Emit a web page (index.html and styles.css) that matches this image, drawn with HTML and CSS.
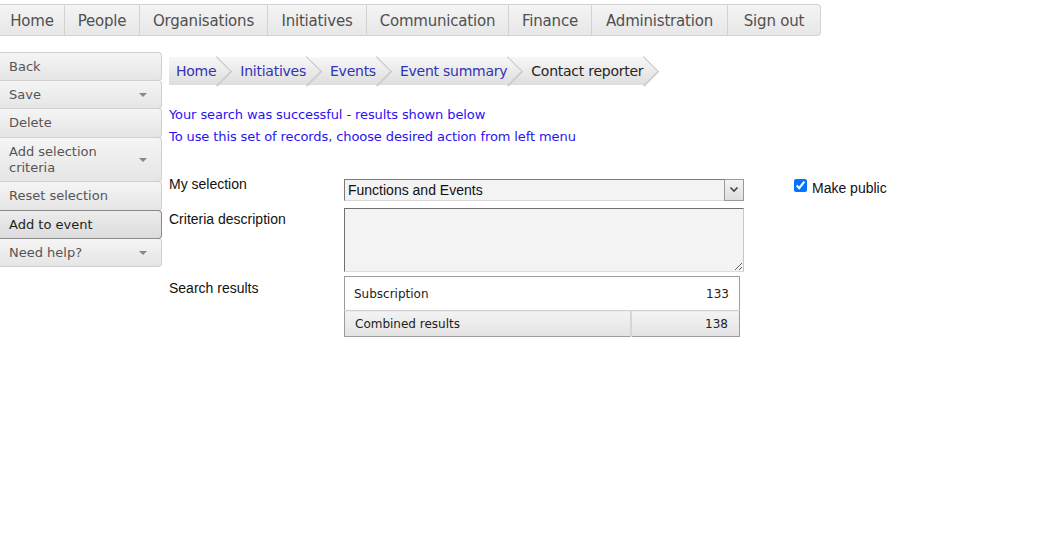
FILE: index.html
```html
<!DOCTYPE html>
<html>
<head>
<meta charset="utf-8">
<link rel="stylesheet" href="styles.css">
</head>
<body>
<nav class="topnav">
  <a class="tn">Home</a>
  <a class="tn">People</a>
  <a class="tn">Organisations</a>
  <a class="tn">Initiatives</a>
  <a class="tn">Communication</a>
  <a class="tn">Finance</a>
  <a class="tn">Administration</a>
  <a class="tn last">Sign out</a>
</nav>
<div class="main">
  <aside class="side">
    <div class="si">Back</div>
    <div class="si dd">Save<span class="tri"></span></div>
    <div class="si step29">Delete</div>
    <div class="si dd tall">Add selection<br>criteria<span class="tri"></span></div>
    <div class="si step29">Reset selection</div>
    <div class="si active">Add to event</div>
    <div class="si dd">Need help?<span class="tri"></span></div>
  </aside>
  <section class="content">
    <ul class="crumbs">
      <li class="crumb first">Home</li>
      <li class="crumb">Initiatives</li>
      <li class="crumb">Events</li>
      <li class="crumb">Event summary</li>
      <li class="crumb current">Contact reporter</li>
    </ul>
    <div class="msgs">
      <p class="msg">Your search was successful - results shown below</p>
      <p class="msg">To use this set of records, choose desired action from left menu</p>
    </div>
    <div class="form">
      <div class="lbl l1">My selection</div>
      <div class="select">
        <span class="sel-text">Functions and Events</span>
        <span class="sel-btn"><svg width="10" height="7" viewBox="0 0 10 7"><path d="M1.5 1.5 L5 5 L8.5 1.5" fill="none" stroke="#444" stroke-width="1.6"/></svg></span>
      </div>
      <label class="pub"><input type="checkbox" checked class="cb"><span class="pub-text">Make public</span></label>

      <div class="lbl l2">Criteria description</div>
      <textarea class="ta"></textarea>
      <div></div>

      <div class="lbl l3">Search results</div>
      <table class="res">
        <tr class="r1"><td class="c1">Subscription</td><td class="c2">133</td></tr>
        <tr class="r2"><td class="c1">Combined results</td><td class="c2">138</td></tr>
      </table>
      <div></div>
    </div>
  </section>
</div>
</body>
</html>
```

FILE: styles.css
```css
* { box-sizing: border-box; }
body {
  margin: 0;
  padding-top: 4px;
  background: #fff;
  font-family: "DejaVu Sans", Verdana, sans-serif;
  color: #222;
}
.topnav {
  display: flex;
  width: 821px;
  height: 32px;
  border: 1px solid #d2d2d2;
  border-left: none;
  border-radius: 0 4px 4px 0;
  background: linear-gradient(#f4f4f4, #e7e7e7);
}
.tn {
  display: flex;
  align-items: center;
  justify-content: center;
  font-size: 15px;
  color: #505050;
  border-right: 1px solid #d2d2d2;
  letter-spacing: -0.2px;
  padding-top: 1px;
}
.tn:nth-child(1) { width: 65px; }
.tn:nth-child(2) { width: 75px; }
.tn:nth-child(3) { width: 128px; }
.tn:nth-child(4) { width: 99px; }
.tn:nth-child(5) { width: 142px; }
.tn:nth-child(6) { width: 83px; }
.tn:nth-child(7) { width: 136px; }
.tn.last { flex: 1; border-right: none; }

.main {
  display: flex;
  margin-top: 16px;
}
.side {
  width: 162px;
  flex: none;
  display: flex;
  flex-direction: column;
}
.si {
  position: relative;
  height: 29px;
  margin-bottom: -1px;
  padding: 0 0 0 9px;
  display: flex;
  align-items: center;
  font-size: 13px;
  color: #555;
  border: 1px solid #d0d0d0;
  border-left: none;
  border-radius: 0 4px 4px 0;
  background: linear-gradient(#f5f5f5, #e5e5e5);
  line-height: 16px;
}
.si.step29 { height: 30px; }
.si.tall { height: 45px; }
.si.active {
  border-color: #8a8a8a;
  border-left: none;
  color: #1e1e1e;
  background: linear-gradient(#ececec, #dcdcdc);
  z-index: 1;
}
.tri {
  position: absolute;
  right: 14px;
  top: 50%;
  margin-top: -2px;
  width: 0;
  height: 0;
  border-left: 4px solid transparent;
  border-right: 4px solid transparent;
  border-top: 4px solid #888;
}

.content {
  margin-left: 7px;
  padding-top: 5px;
}
.crumbs {
  position: relative;
  z-index: 0;
  list-style: none;
  margin: 0;
  padding: 0;
  display: flex;
  width: fit-content;
  height: 28px;
  background: linear-gradient(#f7f7f7, #dedede);
}
.crumb {
  position: relative;
  display: flex;
  align-items: center;
  font-size: 14px;
  color: #3232b4;
  padding: 0 2px 0 22px;
  letter-spacing: -0.25px;
}
.crumb.first { padding-left: 7px; }
.crumb.current { color: #252525; }
.crumb::after {
  content: "";
  position: absolute;
  right: -10px;
  top: 4px;
  width: 20px;
  height: 20px;
  transform: rotate(45deg);
  background: linear-gradient(135deg, #f7f7f7, #dedede);
  border-top: 1px solid #c4c4c4;
  border-right: 2px solid #cdcdcd;
  z-index: -1;
}

.msgs { margin-top: 19px; }
.msg {
  margin: 0;
  font-family: "DejaVu Sans", Verdana, sans-serif;
  font-size: 13px;
  line-height: 22px;
  color: #2a12f2;
  letter-spacing: -0.1px;
}

.form {
  margin-top: 31px;
  display: grid;
  grid-template-columns: 175px 400px auto;
  row-gap: 0;
  align-items: start;
  font-family: "Liberation Sans", Arial, sans-serif;
}
.lbl {
  font-size: 14px;
  line-height: 16px;
  color: #111;
}
.l1 { margin-top: -3px; }
.l2 { margin-top: 10px; }
.l3 { margin-top: 8px; }

.select {
  display: flex;
  align-items: center;
  height: 22px;
  border: 1px solid #7a7a7a;
  border-right: none;
  border-bottom-color: #d8d8d8;
  background: #f3f3f3;
  font-size: 14px;
  color: #111;
}
.sel-text { flex: 1; padding-left: 3px; }
.sel-btn {
  width: 20px;
  height: 22px;
  margin-top: -1px;
  display: flex;
  align-items: center;
  justify-content: center;
  border: 1px solid #9a9a9a;
  background: linear-gradient(#f3f3f3, #dedede);
}
.pub {
  display: flex;
  align-items: flex-start;
  margin-left: 50px;
  font-size: 14px;
  color: #111;
}
.cb {
  margin: 0 5px 0 0;
  width: 13px;
  height: 13px;
}
.pub-text {
  line-height: 16px;
  margin-top: 1px;
}
.ta {
  display: block;
  margin: 7px 0 0 0;
  width: 400px;
  height: 64px;
  background: #f3f3f3;
  border: 1px solid;
  border-color: #707070 #c8c8c8 #dcdcdc #707070;
  border-radius: 0;
  resize: both;
  padding: 0;
}
.res {
  margin-top: 4px;
  width: 396px;
  border: 1px solid #9c9c9c;
  border-collapse: collapse;
  font-family: "DejaVu Sans", Verdana, sans-serif;
  font-size: 12px;
  color: #222;
}
.res td { padding: 0; }
.r1 td { height: 34px; }
.r1 .c1 { padding-left: 9px; }
.r1 .c2 { padding-right: 10px; text-align: right; }
.r2 td {
  height: 26px;
  background: linear-gradient(#f3f3f3, #e3e3e3);
  border-top: 1px solid #cfcfcf;
}
.r2 .c1 { padding-left: 10px; border-right: 2px solid #d6d6d6; }
.r2 .c2 { width: 109px; padding-right: 11px; text-align: right; }
```
